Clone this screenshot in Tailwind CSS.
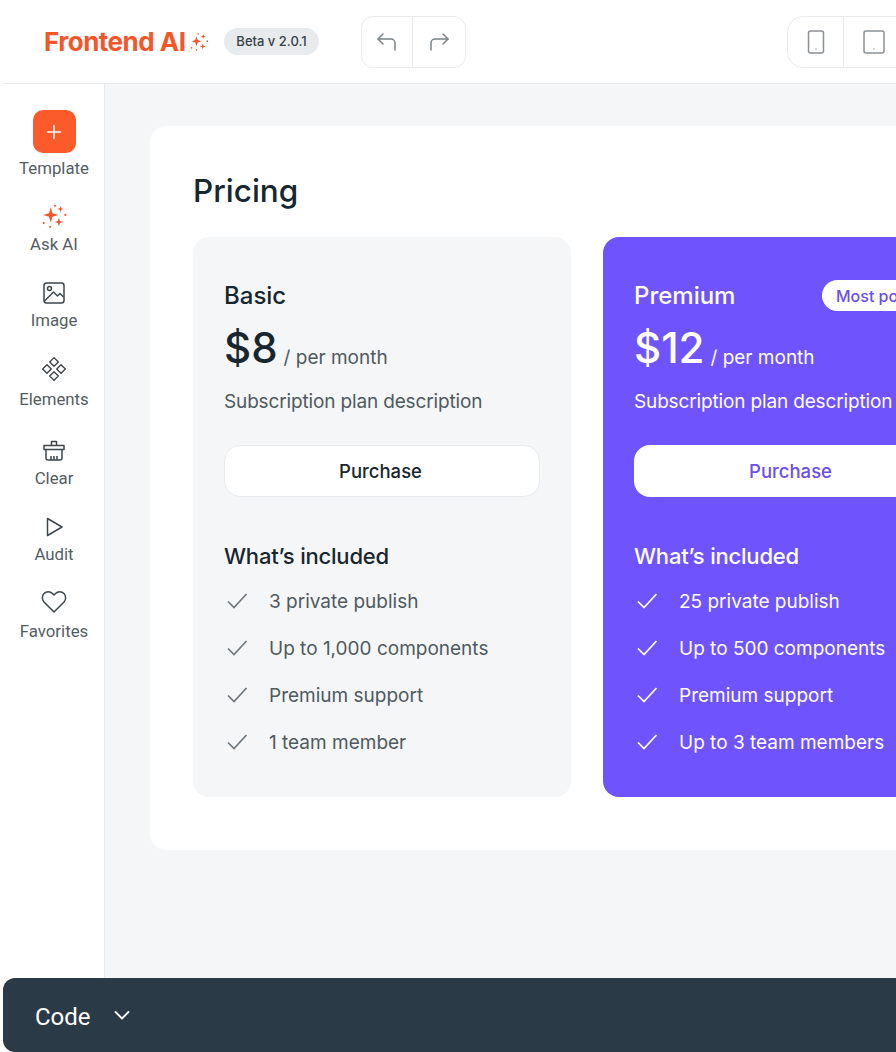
<!DOCTYPE html>
<html lang="en">
  <head>
    <meta charset="UTF-8" />
    <title>Frontend AI</title>
    <meta name="viewport" content="width=device-width, initial-scale=1.0" />
    <script src="https://cdn.jsdelivr.net/npm/@tailwindcss/browser@4"></script>
  </head>
  <body class="bg-white h-[1052px] w-[896px] overflow-hidden flex flex-col font-['Inter',sans-serif] text-[#18262f]">

    <!-- Top bar -->
    <header class="h-[84px] shrink-0 ml-[3px] pl-[41px] border-b border-[#e8ebed] flex items-center">
      <span class="w-[141px] shrink-0 text-[26px] font-bold tracking-[-0.5px] text-[#f4562a] whitespace-nowrap">Frontend AI</span>
      <svg class="w-[20px] h-[20px] shrink-0 ml-[4px] text-[#f4562a]" viewBox="0 0 24 24" fill="currentColor">
        <path d="M9 5l1.500 4.500L15 11l-4.500 1.500L9 17l-1.500-4.500L3 11l4.500-1.500z" />
        <path d="M17 2.500l.7 2.300 2.300.7-2.300.7-.7 2.300-.7-2.300-2.300-.7 2.300-.7z" />
        <path d="M16.500 14l.9 2.600 2.600.9-2.600.9-.9 2.600-.9-2.600-2.600-.9 2.600-.9z" />
        <circle cx="11" cy="2.500" r="1" /><circle cx="22" cy="11" r="1" /><circle cx="3" cy="19" r="1" /><circle cx="9" cy="21.500" r="1" />
      </svg>
      <span class="ml-[15px] w-[95px] shrink-0 h-[27px] rounded-full bg-[#e8ebed] text-[13px] font-medium text-[#37424a] flex items-center justify-center whitespace-nowrap">Beta v 2.0.1</span>

      <div class="ml-[42px] h-[52px] w-[105px] shrink-0 flex border border-[#e8ebed] rounded-[12px]">
        <div class="w-[51px] flex items-center justify-center border-r border-[#e8ebed]">
          <svg class="w-[24px] h-[24px] text-[#7a8287]" viewBox="0 0 24 24" fill="none" stroke="currentColor" stroke-width="1.500" stroke-linecap="round" stroke-linejoin="round">
            <path d="M8 4L3 9l5 5" /><path d="M3 9h13a4 4 0 0 1 4 4v7" />
          </svg>
        </div>
        <div class="flex-1 flex items-center justify-center">
          <svg class="w-[24px] h-[24px] text-[#7a8287]" viewBox="0 0 24 24" fill="none" stroke="currentColor" stroke-width="1.500" stroke-linecap="round" stroke-linejoin="round">
            <path d="M16 4l5 5-5 5" /><path d="M21 9H8a4 4 0 0 0-4 4v7" />
          </svg>
        </div>
      </div>

      <div class="ml-[321px] h-[52px] w-[200px] shrink-0 flex border border-[#e8ebed] rounded-[16px]">
        <div class="w-[56px] flex items-center justify-center border-r border-[#e8ebed]">
          <svg class="w-[18px] h-[24px] text-[#8b9196]" viewBox="0 0 18 24" fill="none" stroke="currentColor" stroke-width="1.500">
            <rect x="1.500" y="1" width="15" height="22" rx="2" /><path d="M8.500 19h1" />
          </svg>
        </div>
        <div class="w-[60px] flex items-center justify-center">
          <svg class="w-[22px] h-[24px] text-[#8b9196]" viewBox="0 0 22 24" fill="none" stroke="currentColor" stroke-width="1.500">
            <rect x="1" y="1" width="20" height="22" rx="2" /><path d="M10.500 19h1" />
          </svg>
        </div>
      </div>
    </header>

    <div class="flex-1 min-h-0 flex">
      <!-- Sidebar -->
      <nav class="w-[105px] shrink-0 pl-[4px] border-r border-[#e8ebed] flex flex-col items-center pt-[26px] text-[16.8px] text-[#545d63] font-['Roboto',sans-serif]">
        <div class="w-[43px] h-[43px] rounded-[10px] bg-[#fc5a2b] flex items-center justify-center">
          <svg class="w-[20px] h-[20px] text-white" viewBox="0 0 20 20" fill="none" stroke="currentColor" stroke-width="1.500" stroke-linecap="round"><path d="M10 3.500v13M3.500 10h13" /></svg>
        </div>
        <span class="mt-[4px] leading-[22px]">Template</span>

        <svg class="mt-[24px] w-[26px] h-[26px] text-[#f4562a]" viewBox="0 0 24 24" fill="currentColor">
          <path d="M9 4l1.600 5.400L16 11l-5.400 1.600L9 18l-1.600-5.400L2 11l5.400-1.600z" />
          <path d="M18 2.500l.7 2.300 2.300.7-2.300.7-.7 2.300-.7-2.300-2.300-.7 2.300-.7z" />
          <path d="M16.500 13.500l1 3 3 1-3 1-1 3-1-3-3-1 3-1z" />
          <circle cx="13" cy="2.500" r="1" /><circle cx="22.500" cy="11" r="1" /><circle cx="2.500" cy="18.500" r="1" /><circle cx="8.500" cy="22" r="1" />
        </svg>
        <span class="mt-[4px] leading-[22px]">Ask AI</span>

        <svg class="mt-[26px] w-[24px] h-[24px] text-[#3d464c]" viewBox="0 0 24 24" fill="none" stroke="currentColor" stroke-width="1.500" stroke-linejoin="round">
          <rect x="2" y="2" width="20" height="20" rx="2.500" /><circle cx="7.500" cy="7.500" r="2" /><path d="M2.500 20l9-9 4 4 2.500-2.500 3.500 3.500" />
        </svg>
        <span class="mt-[4px] leading-[22px]">Image</span>

        <svg class="mt-[25px] w-[26px] h-[26px] text-[#3d464c]" viewBox="0 0 24 24" fill="none" stroke="currentColor" stroke-width="1.300" stroke-linejoin="round">
          <path d="M12 1.500l4 4-4 4-4-4z" /><path d="M18.500 8l4 4-4 4-4-4z" /><path d="M5.500 8l4 4-4 4-4-4z" /><path d="M12 14.500l4 4-4 4-4-4z" />
        </svg>
        <span class="mt-[6px] leading-[22px]">Elements</span>

        <svg class="mt-[29px] w-[24px] h-[24px] text-[#3d464c]" viewBox="0 0 24 24" fill="none" stroke="currentColor" stroke-width="1.500" stroke-linejoin="round">
          <path d="M9.500 6V2.500h5V6" /><path d="M2 6.500h20v4H2z" /><path d="M4 10.500V19a2 2 0 0 0 2 2h12a2 2 0 0 0 2-2v-8.500" /><path d="M9 21v-4M12 21v-4M15 21v-4" />
        </svg>
        <span class="mt-[4px] leading-[22px]">Clear</span>

        <svg class="mt-[26px] w-[24px] h-[24px] text-[#3d464c]" viewBox="0 0 24 24" fill="none" stroke="currentColor" stroke-width="1.500" stroke-linejoin="round">
          <path d="M5.500 3.500L20 12 5.500 20.500z" />
        </svg>
        <span class="mt-[4px] leading-[22px]">Audit</span>

        <svg class="mt-[25px] w-[26px] h-[24px] text-[#3d464c]" viewBox="0 0 26 24" fill="none" stroke="currentColor" stroke-width="1.500" stroke-linejoin="round">
          <path d="M13 22L3 12a6.300 6.300 0 0 1 0-8.500 6 6 0 0 1 8.500 0L13 5l1.500-1.500a6 6 0 0 1 8.500 0 6.300 6.300 0 0 1 0 8.500z" />
        </svg>
        <span class="mt-[6px] leading-[22px]">Favorites</span>
      </nav>

      <!-- Canvas -->
      <main class="flex-1 min-w-0 bg-[#f4f6f7] pt-[42px] pl-[45px]">
        <section class="w-[900px] h-[724px] bg-white rounded-l-[16px] pt-[44px] pl-[43px]">
          <h1 class="text-[31.5px] leading-[42px] font-medium">Pricing</h1>

          <div class="mt-[25px] flex gap-[32px]">
            <!-- Basic -->
            <article class="w-[378px] h-[560px] shrink-0 rounded-[16px] bg-[#f4f6f7] p-[31px] pt-[43px]">
              <h2 class="text-[24px] leading-[32px] font-medium">Basic</h2>
              <div class="mt-[12px] h-[48px] flex items-end">
                <span class="text-[42px] leading-[48px] font-medium">$8</span>
                <span class="ml-[6px] mb-[2px] text-[19px] leading-[24px] text-[#4f5a61] whitespace-nowrap">/ per month</span>
              </div>
              <p class="mt-[17px] text-[19px] leading-[26px] text-[#4f5a61] whitespace-nowrap tracking-[-0.15px]">Subscription plan description</p>
              <button class="mt-[30px] w-full h-[52px] pt-[2px] pr-[3px] rounded-[16px] bg-white border border-[#e8ebed] text-[18.5px] font-medium">Purchase</button>
              <h3 class="mt-[45px] text-[22px] leading-[28px] font-medium tracking-[-0.2px]">What’s included</h3>
              <ul class="mt-[16px] flex flex-col gap-[15px] text-[19px] leading-[32px] text-[#4f5a61]">
                <li class="flex items-center pl-[1px]"><svg class="w-[24px] h-[24px] shrink-0 mr-[20px] mb-[2px] text-[#6e777d]" viewBox="0 0 24 24" fill="none" stroke="currentColor" stroke-width="1.700"><path d="M3 12.500l6 6L21.500 5" /></svg>3&nbsp;private publish</li>
                <li class="flex items-center pl-[1px]"><svg class="w-[24px] h-[24px] shrink-0 mr-[20px] mb-[2px] text-[#6e777d]" viewBox="0 0 24 24" fill="none" stroke="currentColor" stroke-width="1.700"><path d="M3 12.500l6 6L21.500 5" /></svg>Up to 1,000 components</li>
                <li class="flex items-center pl-[1px]"><svg class="w-[24px] h-[24px] shrink-0 mr-[20px] mb-[2px] text-[#6e777d]" viewBox="0 0 24 24" fill="none" stroke="currentColor" stroke-width="1.700"><path d="M3 12.500l6 6L21.500 5" /></svg>Premium support</li>
                <li class="flex items-center pl-[1px]"><svg class="w-[24px] h-[24px] shrink-0 mr-[20px] mb-[2px] text-[#6e777d]" viewBox="0 0 24 24" fill="none" stroke="currentColor" stroke-width="1.700"><path d="M3 12.500l6 6L21.500 5" /></svg>1 team member</li>
              </ul>
            </article>

            <!-- Premium -->
            <article class="w-[378px] h-[560px] shrink-0 rounded-[16px] bg-[#6f53fd] p-[31px] pt-[43px] text-white">
              <div class="flex items-center justify-between">
                <h2 class="text-[24px] leading-[32px] font-medium">Premium</h2>
                <span class="w-[127px] h-[31px] mb-[1px] pl-[14px] mr-[1px] rounded-full bg-white text-[#6a4fe8] text-[16px] font-medium flex items-center whitespace-nowrap">Most popular</span>
              </div>
              <div class="mt-[12px] h-[48px] flex items-end">
                <span class="text-[42px] leading-[48px] font-medium">$12</span>
                <span class="ml-[6px] mb-[2px] text-[19px] leading-[24px] whitespace-nowrap">/ per month</span>
              </div>
              <p class="mt-[17px] text-[19px] leading-[26px] whitespace-nowrap tracking-[-0.15px]">Subscription plan description</p>
              <button class="mt-[30px] w-full h-[52px] pt-[2px] pr-[3px] rounded-[16px] bg-white text-[#6a4fe8] text-[18.5px] font-medium">Purchase</button>
              <h3 class="mt-[45px] text-[22px] leading-[28px] font-medium tracking-[-0.2px]">What’s included</h3>
              <ul class="mt-[16px] flex flex-col gap-[15px] text-[19px] leading-[32px]">
                <li class="flex items-center pl-[1px]"><svg class="w-[24px] h-[24px] shrink-0 mr-[20px] mb-[2px]" viewBox="0 0 24 24" fill="none" stroke="currentColor" stroke-width="1.700"><path d="M3 12.500l6 6L21.500 5" /></svg>25&nbsp;private publish</li>
                <li class="flex items-center pl-[1px]"><svg class="w-[24px] h-[24px] shrink-0 mr-[20px] mb-[2px]" viewBox="0 0 24 24" fill="none" stroke="currentColor" stroke-width="1.700"><path d="M3 12.500l6 6L21.500 5" /></svg>Up to 500 components</li>
                <li class="flex items-center pl-[1px]"><svg class="w-[24px] h-[24px] shrink-0 mr-[20px] mb-[2px]" viewBox="0 0 24 24" fill="none" stroke="currentColor" stroke-width="1.700"><path d="M3 12.500l6 6L21.500 5" /></svg>Premium support</li>
                <li class="flex items-center pl-[1px]"><svg class="w-[24px] h-[24px] shrink-0 mr-[20px] mb-[2px]" viewBox="0 0 24 24" fill="none" stroke="currentColor" stroke-width="1.700"><path d="M3 12.500l6 6L21.500 5" /></svg>Up to 3&nbsp;team members</li>
              </ul>
            </article>
          </div>
        </section>
      </main>
    </div>

    <!-- Code bar -->
    <footer class="h-[74px] shrink-0 ml-[3px] rounded-l-[12px] bg-[#2a3a46] text-white flex items-center pl-[32px] pt-[3px]">
      <span class="text-[24px] font-['Roboto',sans-serif]">Code</span>
      <svg class="ml-[21px] mb-[3px] w-[20px] h-[20px]" viewBox="0 0 20 20" fill="none" stroke="currentColor" stroke-width="1.800" stroke-linecap="round" stroke-linejoin="round"><path d="M3.500 7L10 13.500 16.500 7" /></svg>
    </footer>
  </body>
</html>
